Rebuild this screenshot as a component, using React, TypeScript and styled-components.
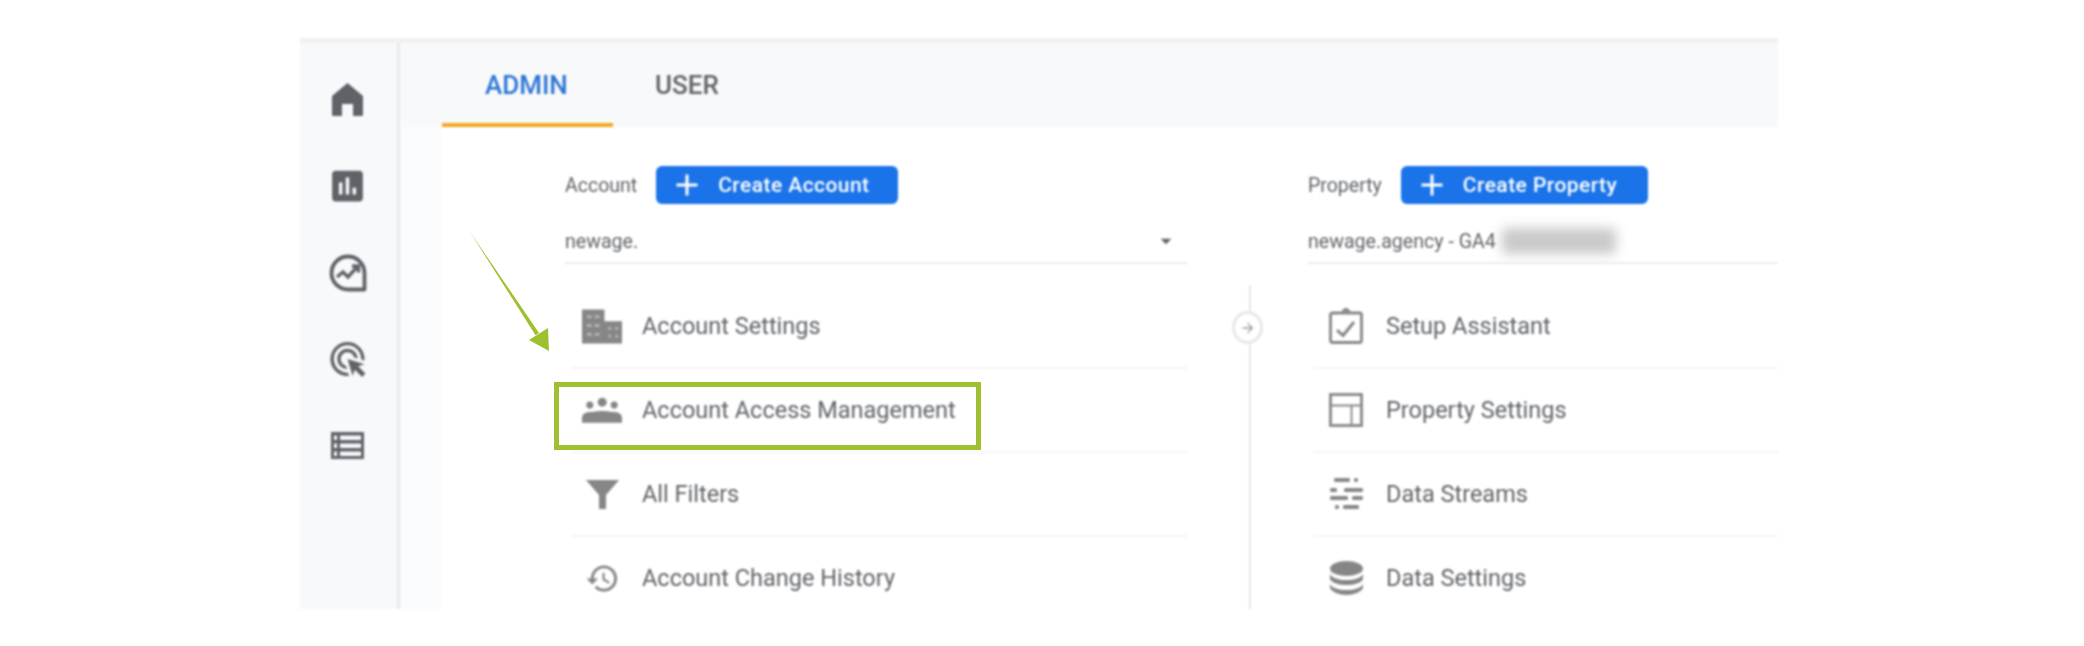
import React from "react";
import styled, { createGlobalStyle } from "styled-components";
import { MdAssessment, MdAdsClick, MdHistory, MdArrowDropDown, MdAdd, MdArrowForward } from "react-icons/md";

const Global = createGlobalStyle`
  html, body { margin: 0; padding: 0; background: #fff; }
  body { font-family: Roboto, "Liberation Sans", sans-serif; overflow: hidden; }
`;

const Page = styled.div`
  position: relative;
  width: 2084px;
  height: 646px;
  padding: 38px 306px 37px 300px;
  box-sizing: border-box;
  background: #fff;
`;

const Frame = styled.div`
  display: flex;
  height: 100%;
  border-top: 5px solid #f1f1f1;
  box-sizing: border-box;
  overflow: hidden;
  filter: blur(1px);
  background: #fff;
`;

const Sidebar = styled.nav`
  width: 100px;
  flex: none;
  display: flex;
  flex-direction: column;
  align-items: center;
  gap: 45.5px;
  padding: 36px 2px 0 0;
  box-sizing: border-box;
  background: #f8f9fb;
  border-right: 3px solid #e8eaed;
  color: #5f6368;
`;

const SideIcon = styled.span`
  height: 41px;
  width: 41px;
  display: flex;
  align-items: center;
  justify-content: center;
`;

const Main = styled.main`
  flex: 1;
  min-width: 0;
  display: flex;
  flex-direction: column;
`;

const TabBar = styled.div`
  height: 84px;
  flex: none;
  display: flex;
  padding-left: 42px;
  background: #f8f9fa;
`;

const Tab = styled.div<{ $active?: boolean }>`
  width: ${(p) => (p.$active ? "171px" : "auto")};
  height: 84px;
  box-sizing: border-box;
  padding: 4px 0 0 ${(p) => (p.$active ? "43px" : "42px")};
  display: flex;
  align-items: center;
  font-size: 26px;
  font-weight: 500;
  color: ${(p) => (p.$active ? "#2a74d8" : "#5f6368")};
  border-bottom: 4px solid ${(p) => (p.$active ? "#f5a623" : "transparent")};
`;

const Body = styled.div`
  flex: 1;
  min-height: 0;
  display: flex;
`;

const Gutter = styled.div`
  width: 42px;
  flex: none;
  background: #fbfcfd;
`;

const Columns = styled.div`
  flex: 1;
  min-width: 0;
  display: flex;
  padding-left: 123px;
`;

const Column = styled.section<{ $width?: string }>`
  width: ${(p) => p.$width ?? "auto"};
  flex: ${(p) => (p.$width ? "none" : "1")};
  min-width: 0;
  padding-top: 39px;
`;

const HeadRow = styled.div`
  display: flex;
  align-items: center;
  height: 38px;
  gap: 19px;
`;

const Label = styled.span`
  font-size: 19.5px;
  color: #5f6368;
  white-space: nowrap;
`;

const CreateButton = styled.div<{ $width: string }>`
  width: ${(p) => p.$width};
  height: 38px;
  border-radius: 6px;
  background: #1a73e8;
  color: #fff;
  font-size: 21px;
  font-weight: 500;
  letter-spacing: 0.45px;
  display: flex;
  align-items: center;
  gap: 13px;
  padding-left: 13px;
  box-sizing: border-box;
  white-space: nowrap;
`;

const Select = styled.div`
  display: flex;
  align-items: center;
  justify-content: space-between;
  height: 60px;
  padding: 16px 8px 0 0;
  box-sizing: border-box;
  border-bottom: 2px solid #eceded;
  font-size: 19.6px;
  color: #5f6368;
`;

const SelectValue = styled.span`
  display: flex;
  align-items: center;
`;

const Redacted = styled.span`
  display: block;
  width: 114px;
  height: 26px;
  margin-left: 6px;
  background: #c9c9c9;
  filter: blur(6px);
`;

const List = styled.div<{ $inset: string }>`
  margin: 21px 0 0 ${(p) => p.$inset};
`;

const Row = styled.div<{ $pad: string }>`
  height: 84px;
  box-sizing: border-box;
  display: flex;
  align-items: center;
  gap: 20px;
  padding-left: ${(p) => p.$pad};
  border-bottom: 2px solid #f5f5f5;
  font-size: 23.5px;
  color: #5f6368;
  white-space: nowrap;
`;

const RowIcon = styled.span`
  width: 40px;
  height: 40px;
  flex: none;
  display: flex;
  align-items: center;
  justify-content: center;
  color: #868686;
`;

const Connector = styled.div`
  width: 121px;
  flex: none;
  padding-top: 158px;
  display: flex;
  flex-direction: column;
  align-items: center;
`;

const ConnectorLine = styled.div<{ $height?: string }>`
  width: 2px;
  height: ${(p) => p.$height ?? "auto"};
  flex: ${(p) => (p.$height ? "none" : "1")};
  margin-left: 4px;
  background: #e6e6e6;
`;

const ConnectorDot = styled.div`
  width: 31px;
  height: 33px;
  flex: none;
  box-sizing: border-box;
  border: 3px solid #e8e8e8;
  border-radius: 50%;
  color: #9a9a9a;
  display: flex;
  align-items: center;
  justify-content: center;
`;

const Highlight = styled.div`
  position: absolute;
  left: 554px;
  top: 382px;
  width: 427px;
  height: 68px;
  box-sizing: border-box;
  border: 5px solid #a0c034;
`;

const Arrow = styled.svg`
  position: absolute;
  left: 458px;
  top: 224px;
  width: 100px;
  height: 135px;
`;

const HomeIcon = () => (
  <svg width="31" height="33" viewBox="0 0 31 33" fill="currentColor">
    <path d="M15.5 0L31 13v19a1 1 0 0 1-1 1H21V21H10v12H1a1 1 0 0 1-1-1V13z" />
  </svg>
);

const InsightsIcon = () => (
  <svg width="38" height="38" viewBox="0 0 38 38" fill="none" stroke="currentColor">
    <path d="M35.5 35.5H19A16.5 16.5 0 1 1 35.5 19z" strokeWidth="3.8" strokeLinejoin="round" />
    <path d="M8 23l6-5 5 5 9-10" strokeWidth="3.4" />
    <path d="M23 12h6.5v6.5" strokeWidth="3.4" />
  </svg>
);

const ListIcon = () => (
  <svg width="33" height="27" viewBox="0 0 33 27" fill="currentColor">
    <path fillRule="evenodd" d="M0 0h33v27H0zM3 3.5v4.5h3V3.5zm6 0v4.5h21V3.5zM3 11.5v4.5h3v-4.5zm6 0v4.5h21v-4.5zM3 19.5v4.5h3v-4.5zm6 0v4.5h21v-4.5z" />
  </svg>
);

const BuildingIcon = () => (
  <svg width="41" height="35" viewBox="0 0 41 35">
    <path fill="currentColor" d="M0 0h23v12h18v23H0z" />
    <g fill="#b4b4b4">
      <rect x="5" y="6" width="5" height="3" />
      <rect x="13" y="6" width="5" height="3" />
      <rect x="5" y="15" width="5" height="3" />
      <rect x="13" y="15" width="5" height="3" />
      <rect x="5" y="24" width="5" height="3" />
      <rect x="13" y="24" width="5" height="3" />
      <rect x="27" y="18" width="3" height="3" />
      <rect x="34" y="18" width="3" height="3" />
      <rect x="27" y="26" width="3" height="3" />
      <rect x="34" y="26" width="3" height="3" />
    </g>
  </svg>
);

const GroupIcon = () => (
  <svg width="41" height="26" viewBox="0 0 41 26" fill="currentColor">
    <circle cx="8" cy="8" r="3.6" />
    <circle cx="20.7" cy="5" r="4.6" />
    <circle cx="33" cy="8" r="3.6" />
    <path d="M0 26v-5c0-4 4-6 9-6 3 0 5-1 11.5-1S29 15 32 15c5 0 9 2 9 6v5z" />
  </svg>
);

const FunnelIcon = () => (
  <svg width="33" height="29" viewBox="0 0 33 29" fill="currentColor">
    <path d="M0 0h33L20 15v14h-7V15z" />
  </svg>
);

const ClipboardIcon = () => (
  <svg width="34" height="36" viewBox="0 0 34 36" fill="none" stroke="currentColor" strokeWidth="2.8">
    <rect x="1.5" y="5" width="31" height="29.5" rx="2" />
    <path d="M14 4.5a3 3 0 0 1 6 0" />
    <path d="M8 22l6 5.5L25 14" strokeWidth="3" />
  </svg>
);

const PanelIcon = () => (
  <svg width="34" height="34" viewBox="0 0 34 34" fill="none" stroke="currentColor" strokeWidth="2.8">
    <rect x="1.5" y="1.5" width="31" height="31" />
    <path d="M1.5 12.5h31M22.5 12.5v20" strokeWidth="1.8" />
  </svg>
);

const StreamsIcon = () => (
  <svg width="33" height="34" viewBox="0 0 33 34" fill="currentColor">
    <rect x="4" y="1" width="16" height="4" rx="1.5" />
    <rect x="24" y="1" width="4" height="4" rx="1.5" />
    <rect x="0" y="11" width="7" height="4" rx="1.5" />
    <rect x="14" y="11" width="19" height="4" rx="1.5" />
    <rect x="0" y="19" width="18" height="4" rx="1.5" />
    <rect x="22" y="19" width="11" height="4" rx="1.5" />
    <rect x="5" y="28" width="4" height="4" rx="1.5" />
    <rect x="13" y="28" width="16" height="4" rx="1.5" />
  </svg>
);

const DatabaseIcon = () => (
  <svg width="33" height="34" viewBox="0 0 33 34" fill="currentColor">
    <ellipse cx="16.5" cy="7.5" rx="16.5" ry="7.5" />
    <path d="M0 13c2 4 9 6 16.5 6S31 17 33 13v5c-2 4-9 6-16.5 6S2 22 0 18z" />
    <path d="M0 23c2 4 9 6 16.5 6S31 27 33 23v4c-2 4-9 7-16.5 7S2 31 0 27z" />
  </svg>
);

type Item = { label: string; icon: React.ReactNode };

const accountItems: Item[] = [
  { label: "Account Settings", icon: <BuildingIcon /> },
  { label: "Account Access Management", icon: <GroupIcon /> },
  { label: "All Filters", icon: <FunnelIcon /> },
  { label: "Account Change History", icon: <MdHistory size={35} /> },
];

const propertyItems: Item[] = [
  { label: "Setup Assistant", icon: <ClipboardIcon /> },
  { label: "Property Settings", icon: <PanelIcon /> },
  { label: "Data Streams", icon: <StreamsIcon /> },
  { label: "Data Settings", icon: <DatabaseIcon /> },
];

const Items = ({ items, inset, pad }: { items: Item[]; inset: string; pad: string }) => (
  <List $inset={inset}>
    {items.map((item) => (
      <Row key={item.label} $pad={pad}>
        <RowIcon>{item.icon}</RowIcon>
        {item.label}
      </Row>
    ))}
  </List>
);

export default function App() {
  return (
    <Page>
      <Global />
      <Frame>
        <Sidebar>
          <SideIcon><HomeIcon /></SideIcon>
          <SideIcon><MdAssessment size={44} /></SideIcon>
          <SideIcon><InsightsIcon /></SideIcon>
          <SideIcon><MdAdsClick size={42} /></SideIcon>
          <SideIcon><ListIcon /></SideIcon>
        </Sidebar>
        <Main>
          <TabBar>
            <Tab $active>ADMIN</Tab>
            <Tab>USER</Tab>
          </TabBar>
          <Body>
            <Gutter />
            <Columns>
              <Column $width="622px">
                <HeadRow>
                  <Label>Account</Label>
                  <CreateButton $width="242px"><MdAdd size={36} />Create Account</CreateButton>
                </HeadRow>
                <Select>
                  <SelectValue>newage.</SelectValue>
                  <MdArrowDropDown size={26} />
                </Select>
                <Items items={accountItems} inset="6px" pad="11px" />
              </Column>
              <Connector>
                <ConnectorLine $height="26px" />
                <ConnectorDot><MdArrowForward size={16} /></ConnectorDot>
                <ConnectorLine />
              </Connector>
              <Column>
                <HeadRow>
                  <Label>Property</Label>
                  <CreateButton $width="247px"><MdAdd size={36} />Create Property</CreateButton>
                </HeadRow>
                <Select>
                  <SelectValue>newage.agency - GA4<Redacted /></SelectValue>
                </Select>
                <Items items={propertyItems} inset="5px" pad="13px" />
              </Column>
            </Columns>
          </Body>
        </Main>
      </Frame>
      <Highlight />
      <Arrow viewBox="0 0 100 135" fill="#9dc02e">
        <path d="M12 8L81 109l-3.5 2.2z" />
        <path d="M91 127L90 104 71 116z" />
      </Arrow>
    </Page>
  );
}
